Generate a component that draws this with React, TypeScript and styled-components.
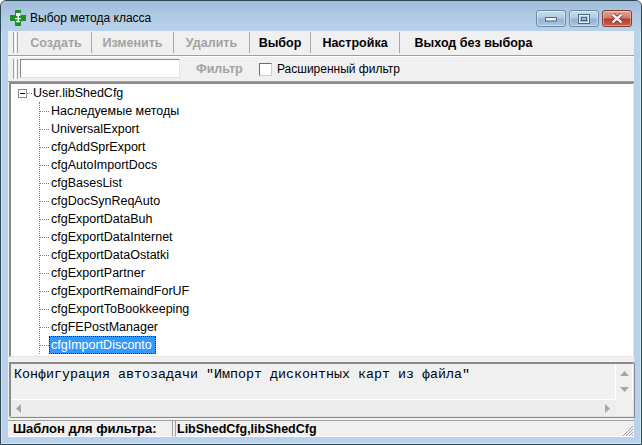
import styled, { createGlobalStyle } from "styled-components";

const GlobalStyle = createGlobalStyle`
  html, body {
    margin: 0;
    padding: 0;
    background: #fff;
  }
`;

const Frame = styled.div`
  box-sizing: border-box;
  width: 642px;
  height: 445px;
  overflow: hidden;
  display: flex;
  flex-direction: column;
  border: 1px solid #2f4a55;
  border-radius: 6px 6px 0 0;
  background: #b9d1ea;
  box-shadow: inset 0 0 0 1px #d4e3f1;
  font-family: "Liberation Sans", Arial, sans-serif;
  color: #000;
`;

const TitleBar = styled.div`
  flex: none;
  height: 30px;
  padding: 0 9px 0 9px;
  display: flex;
  align-items: flex-start;
  background: linear-gradient(#9fbcd9, #b4cde6 60%, #b9d1ea);
  border-radius: 5px 5px 0 0;
`;

const AppIcon = styled.svg`
  width: 16px;
  height: 16px;
  margin-top: 9px;
  flex: none;
`;

const TitleText = styled.div`
  margin: 10px 0 0 4px;
  font-size: 12px;
  line-height: 15px;
  flex: 1;
`;

const Caption = styled.div`
  display: flex;
  gap: 3px;
  margin-top: 9px;
`;

const CaptionButton = styled.div<{ $close?: boolean }>`
  box-sizing: border-box;
  width: 30px;
  height: 17px;
  display: flex;
  align-items: center;
  justify-content: center;
  border: 1px solid ${(p) => (p.$close ? "#7d3a33" : "#6f8aa5")};
  border-radius: 3px;
  background: ${(p) =>
    p.$close
      ? "linear-gradient(#e0a297, #d0796c 48%, #b8392a 52%, #c8604f)"
      : "linear-gradient(#c9dced, #b0cae3 48%, #93b3d2 52%, #a9c6e0)"};
  box-shadow: inset 0 0 0 1px rgba(255, 255, 255, 0.4);
`;

const CaptionGlyph = styled.svg`
  display: block;
`;

const Client = styled.div`
  flex: 1;
  min-height: 0;
  margin: 0 7px 7px 7px;
  background: #f0f0f0;
  display: flex;
  flex-direction: column;
`;

const ToolBar = styled.div`
  box-sizing: border-box;
  flex: none;
  height: 25px;
  display: flex;
  align-items: stretch;
  padding: 1px 0 2px 5px;
  border-bottom: 1px solid #a0a0a0;
  background: #f0f0f0;
`;

const FilterBar = styled(ToolBar)`
  height: 26px;
  padding-top: 2px;
  border-top: 1px solid #fff;
`;

const Grip = styled.div`
  flex: none;
  width: 5px;
  margin-right: 3px;
  border-left: 1px solid #a0a0a0;
  border-right: 1px solid #a0a0a0;
  background: #fff;
  background-clip: content-box;
  padding: 0 1px;
  box-sizing: border-box;
`;

const ToolButton = styled.div<{ $width: number; $disabled?: boolean }>`
  box-sizing: border-box;
  width: ${(p) => p.$width}px;
  display: flex;
  align-items: center;
  justify-content: center;
  font-size: 12.5px;
  font-weight: bold;
  color: ${(p) => (p.$disabled ? "#a3a3a3" : "#000")};
  border-right: 1px solid #a8a8a8;
`;

const LastButton = styled(ToolButton)`
  border-right: none;
`;

const SearchInput = styled.div`
  box-sizing: border-box;
  width: 160px;
  margin: 0 0 1px -1px;
  background: #fff;
  border: 1px solid #8a8a8a;
  border-right-color: #e3e3e3;
  border-bottom-color: #e3e3e3;
`;

const FilterLabel = styled.div`
  margin-left: 16px;
  width: 63px;
  font-size: 12.5px;
  font-weight: bold;
  color: #a3a3a3;
  display: flex;
  align-items: center;
`;

const CheckBox = styled.div`
  box-sizing: border-box;
  width: 13px;
  height: 13px;
  align-self: center;
  background: #fff;
  border: 1px solid #6e6e6e;
  border-right-color: #cfcfcf;
  border-bottom-color: #cfcfcf;
`;

const CheckLabel = styled.div`
  margin-left: 5px;
  font-size: 12px;
  display: flex;
  align-items: center;
`;

const Tree = styled.div`
  box-sizing: border-box;
  flex: none;
  height: 275px;
  margin-left: 1px;
  padding: 0 0 0 7px;
  background: #fff;
  border: 1px solid #e3e3e3;
  border-top: 2px solid #8a8a8a;
  border-left: 2px solid #8a8a8a;
  overflow: hidden;
`;

const RootRow = styled.div`
  height: 18px;
  display: flex;
  align-items: center;
  font-size: 12.5px;
`;

const Expander = styled.div`
  box-sizing: border-box;
  flex: none;
  width: 9px;
  height: 9px;
  border: 1px solid #8a8a8a;
  display: flex;
  align-items: center;
  justify-content: center;

  &::after {
    content: "";
    width: 5px;
    height: 1px;
    background: #000;
  }
`;

const RootDots = styled.div`
  width: 5px;
  margin: 0 1px 0 0;
  border-top: 1px dotted #808080;
`;

const Children = styled.div`
  margin-left: 21px;
  border-left: 1px dotted #808080;
`;

const Row = styled.div`
  height: 18px;
  display: flex;
  align-items: center;
  font-size: 12.5px;
`;

const RowDots = styled.div`
  flex: none;
  width: 9px;
  border-top: 1px dotted #808080;
`;

const RowLabel = styled.div<{ $selected?: boolean }>`
  box-sizing: border-box;
  height: 18px;
  line-height: 16px;
  padding: 0 3px 0 1px;
  border: 1px ${(p) => (p.$selected ? "dotted #0c2c55" : "solid transparent")};
  background: ${(p) => (p.$selected ? "#3399ff" : "transparent")};
  color: ${(p) => (p.$selected ? "#fff" : "#000")};
`;

const Memo = styled.div`
  box-sizing: border-box;
  flex: none;
  height: 55px;
  margin: 5px 0 0 1px;
  display: grid;
  grid-template-columns: 1fr 17px;
  grid-template-rows: 1fr 16px;
  border: 1px solid #e3e3e3;
  border-top: 2px solid #8a8a8a;
  border-left: 2px solid #8a8a8a;
  box-shadow: 1px 1px 0 #8a8a8a;
`;

const MemoText = styled.div`
  padding: 3px 0 0 3px;
  font-family: "Liberation Mono", "Courier New", monospace;
  font-size: 13.33px;
  line-height: 15px;
  white-space: pre;
  overflow: hidden;
  border-right: 1px solid #fff;
  border-bottom: 1px solid #fff;
`;

const VScroll = styled.div`
  display: flex;
  flex-direction: column;
  align-items: center;
  justify-content: space-between;
  padding: 7px 0 8px;
  border-right: 1px solid #fff;
`;

const HScroll = styled.div`
  display: flex;
  align-items: center;
  justify-content: space-between;
  padding: 0 6px 0 5px;
  background: #ededed;
`;

const Corner = styled.div`
  background: #f0f0f0;
`;

const ArrowGlyph = styled.svg`
  display: block;
  fill: #a6a6a6;
`;

const StatusBar = styled.div`
  flex: 1;
  margin-top: 3px;
  display: flex;
  border-top: 1px solid #a0a0a0;
  position: relative;
`;

const StatusCaption = styled.div`
  box-sizing: border-box;
  width: 165px;
  padding-left: 5px;
  font-size: 13px;
  font-weight: bold;
  display: flex;
  align-items: center;
  border-right: 1px solid #a0a0a0;
  border-bottom: 1px solid #fff;
`;

const StatusValue = styled.div`
  box-sizing: border-box;
  flex: 1;
  margin-left: 2px;
  padding-left: 1px;
  font-size: 12.5px;
  font-weight: bold;
  display: flex;
  align-items: center;
  border-left: 1px solid #a0a0a0;
  border-bottom: 1px solid #fff;
`;

const SizeGrip = styled.svg`
  position: absolute;
  right: 0;
  bottom: 0;
`;

const methods = [
  "Наследуемые методы",
  "UniversalExport",
  "cfgAddSprExport",
  "cfgAutoImportDocs",
  "cfgBasesList",
  "cfgDocSynReqAuto",
  "cfgExportDataBuh",
  "cfgExportDataInternet",
  "cfgExportDataOstatki",
  "cfgExportPartner",
  "cfgExportRemaindForUF",
  "cfgExportToBookkeeping",
  "cfgFEPostManager",
  "cfgImportDisconto",
];

export default function App() {
  return (
    <>
      <GlobalStyle />
      <Frame>
        <TitleBar>
          <AppIcon viewBox="0 0 16 16">
            <path d="M5 0h6v5h5v6h-5v5H5v-5H0V5h5z" fill="#1f8f2c" />
            <path d="M6 3h4.5v3H9v5H7.5V6H6z" fill="#fff" />
            <path d="M5 8h6v1.2H5zM6 11h4v1.2H6z" fill="#e8f5e8" />
          </AppIcon>
          <TitleText>Выбор метода класса</TitleText>
          <Caption>
            <CaptionButton>
              <CaptionGlyph width="14" height="6" viewBox="0 0 14 6">
                <rect x="1.5" y="1.5" width="11" height="3.5" fill="#f4f6f8" stroke="#4d6780" />
              </CaptionGlyph>
            </CaptionButton>
            <CaptionButton>
              <CaptionGlyph width="12" height="10" viewBox="0 0 12 10">
                <rect x="1" y="1" width="10" height="8" fill="none" stroke="#e8eef4" strokeWidth="2" />
                <rect x="0.5" y="0.5" width="11" height="9" fill="none" stroke="#4d6780" />
                <rect x="3.5" y="3.5" width="5" height="3" fill="none" stroke="#4d6780" />
              </CaptionGlyph>
            </CaptionButton>
            <CaptionButton $close>
              <CaptionGlyph width="14" height="11" viewBox="0 0 14 11">
                <path d="M2.5 1.5 L11.5 9.5 M11.5 1.5 L2.5 9.5" stroke="#6e2a22" strokeWidth="4" />
                <path d="M2.5 1.5 L11.5 9.5 M11.5 1.5 L2.5 9.5" stroke="#f6f1ee" strokeWidth="2.4" />
              </CaptionGlyph>
            </CaptionButton>
          </Caption>
        </TitleBar>
        <Client>
          <ToolBar>
            <Grip />
            <ToolButton $width={71} $disabled>Создать</ToolButton>
            <ToolButton $width={82} $disabled>Изменить</ToolButton>
            <ToolButton $width={76} $disabled>Удалить</ToolButton>
            <ToolButton $width={61}>Выбор</ToolButton>
            <ToolButton $width={89}>Настройка</ToolButton>
            <LastButton $width={147}>Выход без выбора</LastButton>
          </ToolBar>
          <FilterBar>
            <Grip />
            <SearchInput />
            <FilterLabel>Фильтр</FilterLabel>
            <CheckBox />
            <CheckLabel>Расширенный фильтр</CheckLabel>
          </FilterBar>
          <Tree>
            <RootRow>
              <Expander />
              <RootDots />
              <span>User.libShedCfg</span>
            </RootRow>
            <Children>
              {methods.map((name) => (
                <Row key={name}>
                  <RowDots />
                  <RowLabel $selected={name === "cfgImportDisconto"}>{name}</RowLabel>
                </Row>
              ))}
            </Children>
          </Tree>
          <Memo>
            <MemoText>Конфигурация автозадачи "Импорт дисконтных карт из файла"</MemoText>
            <VScroll>
              <ArrowGlyph width="9" height="5" viewBox="0 0 9 5">
                <path d="M4.5 0 9 5H0z" />
              </ArrowGlyph>
              <ArrowGlyph width="9" height="5" viewBox="0 0 9 5">
                <path d="M0 0h9L4.5 5z" />
              </ArrowGlyph>
            </VScroll>
            <HScroll>
              <ArrowGlyph width="5" height="9" viewBox="0 0 5 9">
                <path d="M5 0v9L0 4.5z" />
              </ArrowGlyph>
              <ArrowGlyph width="5" height="9" viewBox="0 0 5 9">
                <path d="M0 0v9l5-4.5z" />
              </ArrowGlyph>
            </HScroll>
            <Corner />
          </Memo>
          <StatusBar>
            <StatusCaption>Шаблон для фильтра:</StatusCaption>
            <StatusValue>LibShedCfg,libShedCfg</StatusValue>
            <SizeGrip width="12" height="12" viewBox="0 0 12 12">
              <path d="M11 1 1 11M11 4 4 11M11 7 7 11M11 10 10 11" stroke="#a0a0a0" fill="none" />
            </SizeGrip>
          </StatusBar>
        </Client>
      </Frame>
    </>
  );
}
